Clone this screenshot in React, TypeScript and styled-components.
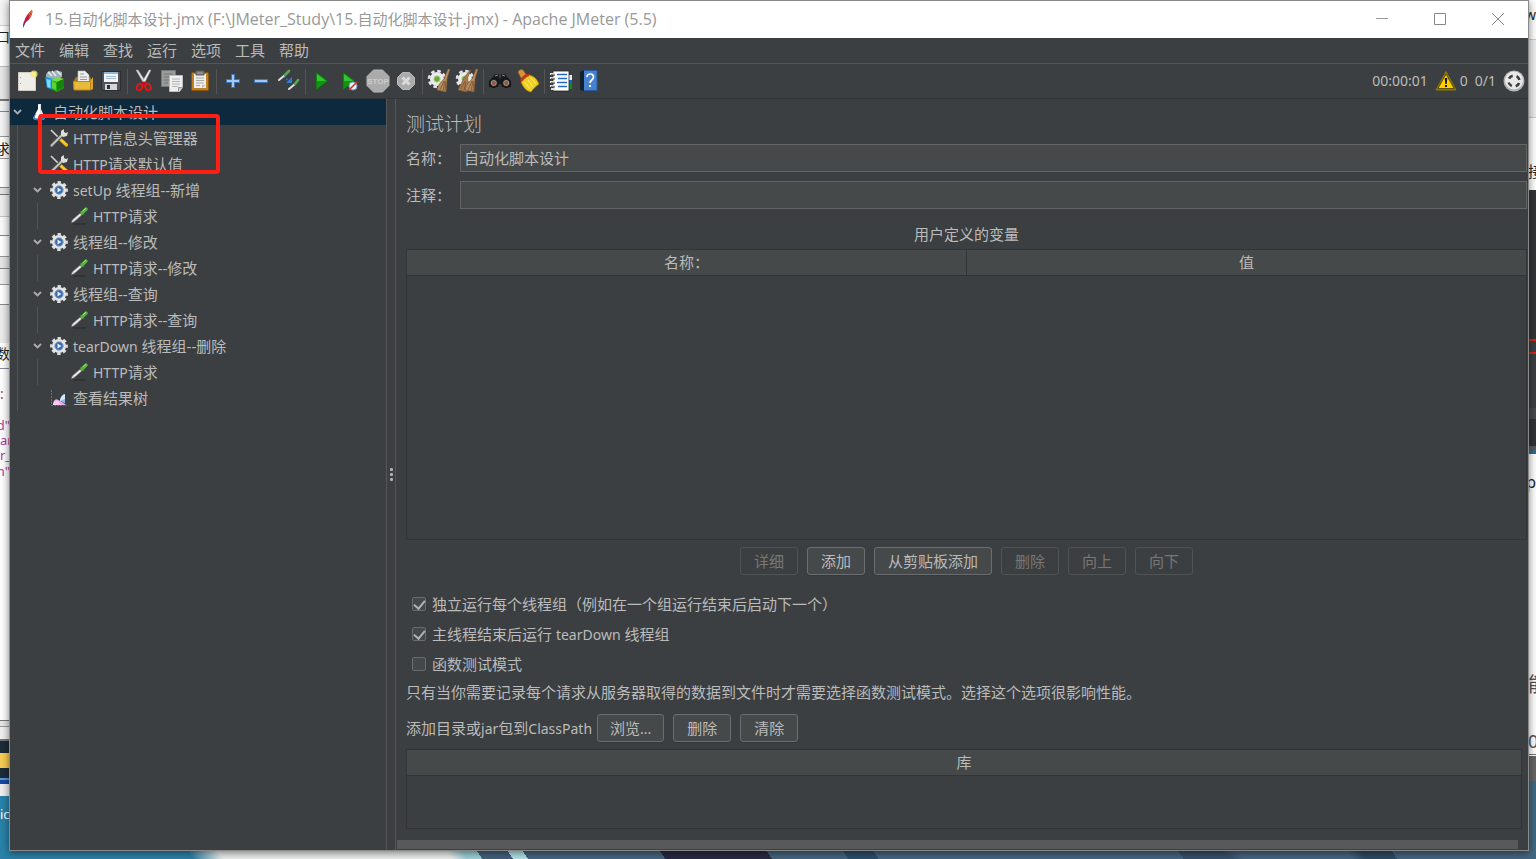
import React from "react";
import styled, { createGlobalStyle } from "styled-components";

const c = {
  bg: "#3c3f41",
  field: "#45494a",
  text: "#bbbbbb",
  line: "#555555",
  dark: "#323435",
  border: "#646464",
};

const GlobalStyle = createGlobalStyle`
  * { box-sizing: border-box; }
  body {
    margin: 0;
    font: 15px/20px "Noto Sans", "Noto Sans CJK SC", sans-serif;
    color: ${c.text};
  }
  button, input { font: inherit; color: inherit; }
  ul { list-style: none; margin: 0; padding: 0; }
  p { margin: 0; }
`;

/* ---------- desktop behind the window ---------- */

const Desktop = styled.div`
  display: grid;
  grid-template-columns: 10px minmax(0, 1fr) 8px;
  grid-template-rows: 1px minmax(0, 1fr) 9px;
  min-height: 100vh;
  background: #2a83aa;
`;

const Backdrop = styled.div`
  position: relative;
  overflow: hidden;
  grid-row: 1 / 4;
`;

const LeftBackdrop = styled(Backdrop)`
  grid-column: 1;
  background: linear-gradient(
    #f4f4f4 0 25px, #d0d0d0 25px 26px, #ffffff 26px 66px, #bbbbbb 66px 67px,
    #e6e6e6 67px 99px, #777777 99px 101px, #f2f2f2 101px 111px, #888888 111px 112px,
    #f4f4f4 112px 136px, #999999 136px 137px, #ffffff 137px 158px, #999999 158px 159px,
    #ffffff 159px 187px, #888888 187px 188px, #e4e4e4 188px 194px, #777777 194px 195px,
    #eeeeee 195px 216px, #c4c4c4 216px 217px, #fafafa 217px 235px, #888888 235px 236px,
    #ffffff 236px 256px, #999999 256px 257px, #e6e6e6 257px 268px, #888888 268px 269px,
    #eeeeee 269px 284px, #999999 284px 285px, #ffffff 285px 304px, #888888 304px 305px,
    #ececec 305px 343px, #ffffff 343px 368px, #8a8c99 368px 369px, #ffffff 369px 720px,
    #777777 720px 721px, #e6e6e6 721px 726px, #999999 726px 727px, #f0f0f0 727px 739px,
    #777777 739px 741px, #1d2c38 741px 753px, #f8cd54 753px 768px, #1d2c38 768px 778px,
    #5599cc 778px 780px, #164aa6 780px 784px, #eeeeee 784px 796px, #2a83aa 796px 100%
  );
`;

const RightBackdrop = styled(Backdrop)`
  grid-column: 3;
  background: linear-gradient(
    #ffffff 0 39px, #cccccc 39px 40px, #eeeeee 40px 117px, #cccccc 117px 118px,
    #ffffff 118px 190px, #333537 190px 339px, #dd2218 339px 341px, #3c3f41 341px 352px,
    #dd2218 352px 354px, #3c3f41 354px 408px, #45494a 408px 419px, #303335 419px 446px,
    #5a5a5a 446px 450px, #3a6883 450px 454px, #ffffff 454px 754px, #777777 754px 755px,
    #ffffff 755px 756px, #666666 756px 781px, #426982 781px 100%
  );
`;

const BottomBackdrop = styled.div`
  grid-column: 2;
  grid-row: 3;
  background: linear-gradient(
    56deg,
    #2c82a7 0 12%, #eef0ef 14% 29%, #9ed3da 30% 31%, #44617b 31% 33%,
    #b5e5e8 33% 34%, #48657f 34% 43%, #292942 43% 50%, #48657f 50% 55%,
    #2e4e69 55% 57%, #48657f 57% 77%, #38526b 77% 80%, #48657f 81% 88%,
    #2f4b63 89% 91%, #48657f 91% 100%
  );
`;

const Fragment = styled.span<{ $top: number; $color?: string; $size?: number; $right?: boolean }>`
  position: absolute;
  top: ${(p) => p.$top}px;
  ${(p) => (p.$right ? "right: 0;" : "left: 0;")}
  color: ${(p) => p.$color ?? "#222"};
  font-size: ${(p) => p.$size ?? 14}px;
  white-space: nowrap;
`;

/* ---------- application window ---------- */

const Window = styled.main`
  grid-column: 2;
  grid-row: 2;
  z-index: 1;
  display: flex;
  flex-direction: column;
  background: ${c.bg};
  box-shadow: 0 0 0 1px #8a8a8a, 0 2px 8px 1px rgba(0, 0, 0, 0.5);
`;

const TitleBar = styled.header`
  display: flex;
  align-items: center;
  height: 37px;
  padding: 0 1px 1px 9px;
  background: #ffffff;
  color: #999999;
  font-family: "Open Sans", "Noto Sans CJK SC", sans-serif;
`;

const Title = styled.h1`
  flex: 1;
  margin: 0 0 0 8px;
  font-size: 16px;
  font-weight: 400;
`;

const TitleHan = styled.span`
  font-size: 15px;
`;

const WindowButton = styled.button`
  display: grid;
  place-items: center;
  width: 58px;
  height: 36px;
  padding: 0;
  border: 0;
  background: none;
`;

const MenuBar = styled.nav`
  display: flex;
  align-items: center;
  gap: 14px;
  height: 26px;
  padding: 0 5px 2px;
  border-bottom: 1px solid ${c.line};
`;

const MenuItem = styled.button`
  padding: 0;
  border: 0;
  background: none;
`;

const ToolBar = styled.div`
  display: flex;
  align-items: center;
  height: 35px;
  padding: 0 3px;
  border-bottom: 1px solid ${c.dark};
`;

const ToolButton = styled.button`
  display: grid;
  place-items: center;
  width: 28px;
  height: 28px;
  padding: 0;
  border: 0;
  background: none;
`;

const ToolSeparator = styled.span`
  width: 1px;
  height: 25px;
  margin: 0 2px;
  background: ${c.line};
`;

const Status = styled.div`
  display: flex;
  align-items: center;
  margin-left: auto;
  font-size: 14px;
  gap: 7px;
`;

const Warnings = styled.span`
  display: flex;
  align-items: center;
  gap: 3px;
`;

const Body = styled.div`
  flex: 1;
  display: flex;
  min-height: 0;
`;

/* ---------- test plan tree ---------- */

const TreePanel = styled.aside`
  position: relative;
  flex: none;
  width: 377px;
  border-right: 1px solid ${c.line};
`;

const TreeRow = styled.li<{ $selected?: boolean }>`
  display: flex;
  align-items: center;
  height: 26px;
  white-space: pre;
  background: ${(p) => (p.$selected ? "#0d293e" : "transparent")};
`;

const Guide = styled.span`
  width: 13px;
  height: 26px;
  margin-left: 7px;
  border-left: 1px solid #505355;
`;

const Toggle = styled.span`
  display: grid;
  place-items: center;
  width: 15px;
`;

const TreeIcon = styled.span`
  display: grid;
  place-items: center;
  width: 28px;
`;

const Latin = styled.span`
  font-size: 14px;
`;

const RedFrame = styled.div`
  position: absolute;
  top: 15px;
  left: 28px;
  width: 182px;
  height: 60px;
  border: 4px solid #ff2015;
  border-radius: 4px;
`;

const Splitter = styled.div`
  display: flex;
  flex-direction: column;
  align-items: center;
  justify-content: center;
  gap: 2px;
  flex: none;
  width: 9px;
  border-right: 1px solid ${c.line};
`;

const Dot = styled.span`
  width: 3px;
  height: 3px;
  border-radius: 1px;
  background: #b0b0b0;
`;

/* ---------- editor ---------- */

const Editor = styled.section`
  flex: 1;
  min-width: 0;
  display: flex;
  flex-direction: column;
`;

const EditorContent = styled.div`
  flex: 1;
  display: flex;
  flex-direction: column;
  padding: 12px 1px 11px 10px;
`;

const Heading = styled.h2`
  margin: 0 0 7px;
  font-size: 19px;
  line-height: 26px;
  font-weight: 300;
`;

const Field = styled.div`
  display: flex;
  align-items: center;
  margin-bottom: 9px;
`;

const FieldLabel = styled.label`
  flex: none;
  width: 54px;
`;

const TextInput = styled.input`
  flex: 1;
  min-width: 0;
  height: 28px;
  padding: 0 3px 2px;
  border: 1px solid ${c.border};
  background: ${c.field};
  outline: 0;
`;

const TableFrame = styled.div<{ $grow?: boolean }>`
  border: 1px solid ${c.dark};
  ${(p) => (p.$grow ? "flex: 1; min-height: 200px;" : "height: 80px; margin-right: 5px;")}
`;

const DataTable = styled.table`
  width: 100%;
  border-collapse: collapse;
  table-layout: fixed;
`;

const HeaderCell = styled.th`
  height: 25px;
  padding: 0;
  font-weight: 400;
  background: ${c.field};
  border-bottom: 1px solid ${c.dark};
  & + & {
    border-left: 1px solid ${c.dark};
  }
`;

const TableTitle = styled.div`
  margin: 6px 0 5px;
  text-align: center;
`;

const ButtonRow = styled.div`
  display: flex;
  justify-content: center;
  gap: 9px;
  margin: 7px 0 14px;
`;

const PushButton = styled.button<{ $tight?: boolean }>`
  height: 28px;
  padding: 0 ${(p) => (p.$tight ? 12 : 13)}px;
  border: 1px solid #6b6e70;
  border-radius: 3px;
  background: ${c.field};
  box-shadow: 0 1px 0 #36393a;
  &:disabled {
    color: #777777;
    border-color: #505354;
    background: none;
    box-shadow: none;
  }
`;

const CheckRow = styled.label`
  display: flex;
  align-items: center;
  gap: 6px;
  height: 30px;
  padding-left: 6px;
`;

const CheckBox = styled.input`
  appearance: none;
  display: grid;
  place-items: center;
  width: 14px;
  height: 14px;
  margin: 0;
  border: 1px solid #6b6b6b;
  border-radius: 2px;
  background: #43494a;
  &:checked::after {
    content: "";
    width: 5px;
    height: 9px;
    margin-bottom: 2px;
    border: solid #b4b4b4;
    border-width: 0 2px 2px 0;
    transform: rotate(40deg);
  }
`;

const Note = styled.p`
  margin-top: 3px;
`;

const ClassPathRow = styled.div`
  display: flex;
  align-items: center;
  gap: 5px;
  margin: 12px 0 7px;
`;

const ButtonGroup = styled.div`
  display: flex;
  gap: 9px;
`;

const ScrollTrack = styled.div`
  height: 10px;
  padding: 0 10px 1px 1px;
`;

const ScrollThumb = styled.div`
  height: 9px;
  background: #58595b;
`;

/* ---------- icons ---------- */

const Svg = ({ size = 24, children }: { size?: number; children: React.ReactNode }) => (
  <svg width={size} height={size} viewBox={`0 0 ${size} ${size}`} fill="none" aria-hidden="true">
    {children}
  </svg>
);

const Feather = () => (
  <Svg size={18}>
    <path d="M5 12C6 7 9 3 13 0c1 3-1 9-6 12z" fill="#c9223f" />
    <path d="M9.500 4c1-2 2-3 3.500-4 1 2 0 4-1 6l-2 2z" fill="#ee6b2c" />
    <path d="M5 11l2 1-1 2-2 4 0-3z" fill="#7a2a78" />
    <path d="M6 12L12 3" stroke="#8b204d" strokeWidth=".7" />
  </Svg>
);

const NewIcon = () => (
  <Svg>
    <path d="M3.500 3.500h17v18h-17z" fill="#efede8" stroke="#d0ccc2" />
    <path d="M5.500 8v1m0 5v1" stroke="#999" />
    <circle cx="19" cy="5" r="3.600" fill="#f6e58d" opacity=".8" />
    <circle cx="19" cy="5" r="2" fill="#fff27a" />
  </Svg>
);

const TemplatesIcon = () => (
  <Svg>
    <path d="M3 5l3-3 4 1 3-2 6 2v5L12 12 3 8z" fill="#9eb1b8" />
    <path d="M5 3l4 4m0-5l4 5m1-5l4 4" stroke="#e8eef0" strokeWidth="1.500" />
    <path d="M2 8l10 2v11l-8-2z" fill="#1d9be0" />
    <path d="M3.500 10l4 1v8l-3-1z" fill="#7cdcfb" />
    <path d="M8 11l6 2 7-3v9l-7 4-6-3z" fill="#25a613" />
    <path d="M8 11l6-3 7 2-7 3z" fill="#75dd42" />
    <path d="M14 13v9l7-4v-8z" fill="#14850b" />
    <path d="M9 12l4 2v7l-4-2z" fill="#5bd338" />
  </Svg>
);

const OpenIcon = () => (
  <Svg>
    <path d="M3 11l2-3h14l2 3v8H3z" fill="#a97912" />
    <path d="M7 2h7l4 4v8H7z" fill="#eeeeee" stroke="#bbb" strokeWidth=".6" />
    <path d="M9 5h4M9 8h7M9 10.500h7" stroke="#999" />
    <path d="M2 12h17l3-4v12l-2 1H3z" fill="#dba626" />
    <path d="M2.500 12.500h17V21H3z" fill="#e9b93c" stroke="#bd8616" />
  </Svg>
);

const SaveIcon = () => (
  <Svg>
    <path d="M2.500 2.500h19v19h-17l-2-2z" fill="#50545d" stroke="#2b2d30" />
    <path d="M5 3h14v10H5z" fill="#f2f5f7" />
    <path d="M5 3h14v2H5z" fill="#8db9dc" />
    <path d="M7 7.500h10M7 9.500h10" stroke="#a8bdcc" />
    <path d="M6 15h12v6H6z" fill="#d4d6d8" />
    <path d="M8 16h3v4H8z" fill="#303338" />
  </Svg>
);

const CutIcon = () => (
  <Svg>
    <path d="M4 1h2l8 12-2 2z" fill="#dedfe0" stroke="#9b9b9b" strokeWidth=".5" />
    <path d="M19 1h-2l-7 12 2 2z" fill="#f0f0f0" stroke="#9b9b9b" strokeWidth=".5" />
    <path d="M12 13l-2 2M12 13l2 2" stroke="#c51111" strokeWidth="3" />
    <ellipse cx="7.500" cy="18" rx="2.600" ry="3.200" transform="rotate(25 7.500 18)" stroke="#e01818" strokeWidth="2" />
    <ellipse cx="16" cy="18" rx="2.600" ry="3.200" transform="rotate(-25 16 18)" stroke="#e01818" strokeWidth="2" />
  </Svg>
);

const CopyIcon = () => (
  <Svg>
    <path d="M1.500 1.500h14v16h-14z" fill="#9a9c9b" stroke="#777" />
    <path d="M4 5h9M4 8h9M4 11h5M4 14h4" stroke="#747675" />
    <path d="M9.500 6.500h13v12l-3 4h-10z" fill="#efefef" stroke="#bdbdbd" />
    <path d="M12 10h8M12 12.500h8M12 15h8M12 17.500h6" stroke="#b4b4b4" />
    <path d="M18.500 22v-3.500h4" fill="#ccc" stroke="#999" />
  </Svg>
);

const PasteIcon = () => (
  <Svg>
    <rect x="3.500" y="3.500" width="17" height="18" rx="1" fill="#c18123" stroke="#875411" />
    <path d="M6 5h12v14H6z" fill="#eeeeec" />
    <path d="M8 2h8v4H8z" fill="#8c8f8a" stroke="#52544f" />
    <path d="M8 9h8M8 11.500h8M8 14h8M8 16.500h4" stroke="#a9a9a9" />
    <path d="M14 19v-3h4z" fill="#bbb" />
  </Svg>
);

const PlusIcon = () => (
  <Svg>
    <path d="M12 5v14M5 12h14" stroke="#3f73b8" strokeWidth="4" />
    <path d="M12 6v12M6 12h12" stroke="#a4c8ee" strokeWidth="2" />
  </Svg>
);

const MinusIcon = () => (
  <Svg>
    <path d="M5 12h14" stroke="#3f73b8" strokeWidth="4" />
    <path d="M6 12h12" stroke="#a4c8ee" strokeWidth="2" />
  </Svg>
);

const ToggleIcon = () => (
  <Svg>
    <path d="M2 11L8 6" stroke="#e1e1df" strokeWidth="2" strokeLinecap="round" />
    <path d="M8 6l4-4" stroke="#5da553" strokeWidth="2.600" strokeLinecap="round" />
    <path d="M12 20l6-5" stroke="#e1e1df" strokeWidth="2" strokeLinecap="round" />
    <path d="M18 15l3-4" stroke="#5da553" strokeWidth="2.600" strokeLinecap="round" />
    <path d="M7 8l6 5" stroke="#3c75c8" strokeWidth="1.400" strokeDasharray="1.500 1.500" />
    <path d="M15 8v6H9z" fill="#2b7fe0" />
  </Svg>
);

const PlayShape = ({ x = 0 }: { x?: number }) => (
  <>
    <path d={`M${5 + x} 3l12 9-12 9z`} fill="#129312" stroke="#0b640b" strokeWidth=".7" />
    <path d={`M${6 + x} 5l9 7-9 0z`} fill="#35c335" />
  </>
);

const StartIcon = () => (
  <Svg>
    <PlayShape x={1} />
  </Svg>
);

const StartNoPauseIcon = () => (
  <Svg>
    <PlayShape />
    <circle cx="15" cy="17" r="4" fill="#e8f0fa" stroke="#7f9dc0" />
    <path d="M11 21l8-8" stroke="#dd2d24" strokeWidth="1.600" />
  </Svg>
);

const StopIcon = () => (
  <Svg>
    <path d="M7.500 1h9L23 7.500v9L16.500 23h-9L1 16.500v-9z" fill="#ababab" stroke="#b9b9b9" />
    <text x="12" y="15" textAnchor="middle" fontSize="8" fontWeight="700" fontFamily="Liberation Sans" fill="#cccccc">
      STOP
    </text>
  </Svg>
);

const ShutdownIcon = () => (
  <Svg>
    <path d="M8.500 3.500h7l5 5v7l-5 5h-7l-5-5v-7z" fill="#ababab" stroke="#b9b9b9" />
    <path d="M8.500 8.500l7 7m0-7l-7 7" stroke="#dadada" strokeWidth="3" />
  </Svg>
);

const ClearIcon = ({ double }: { double?: boolean }) => (
  <Svg>
    <circle cx="10" cy="10" r="8" stroke="#e6e6e6" strokeWidth="2.600" strokeDasharray="3.600 2.683" />
    <circle cx="10" cy="10" r="7" fill="#ebebeb" />
    <circle cx="10" cy="10" r="3.200" fill="#67aa2d" stroke="#b9cfa4" />
    {double && <path d="M15 1h1l-4 9 2 4-2 9-9-2 6-12z" fill="#a97d50" stroke="#775331" strokeWidth=".6" />}
    <path d="M21 0h2l-3 10v3l-1 10-9-2c1-4 3-8 7-11z" fill="#b98e60" stroke="#775331" strokeWidth=".6" />
    <path d="M17 12l-4 9m5-9l-2 10m3-10l-1 10" stroke="#755231" strokeWidth=".8" />
    {double && <path d="M10 12l-4 8m5-7l-2 8" stroke="#755231" strokeWidth=".8" />}
  </Svg>
);

const SearchIcon = () => (
  <Svg>
    <path d="M4 9l3-4h4v4h2V5h4l3 4 3 6v3h-9l-1-3h-2l-1 3H1v-3z" fill="#191b1c" />
    <path d="M7 7l3-1m4 0l3 1" stroke="#8b8d8e" />
    <circle cx="5.800" cy="14" r="4.500" fill="#252627" stroke="#0e0f10" />
    <circle cx="18.200" cy="14" r="4.500" fill="#252627" stroke="#0e0f10" />
    <circle cx="5.800" cy="14" r="2.500" fill="#9c5334" stroke="#9a9a9a" />
    <circle cx="18.200" cy="14" r="2.500" fill="#9c5334" stroke="#9a9a9a" />
  </Svg>
);

const BroomIcon = () => (
  <Svg>
    <path d="M2 3c1-2 3-3 5-2l4 6-5 4z" fill="#d6943a" stroke="#96601c" strokeWidth=".7" />
    <path d="M5 13l8-7c5 1 8 4 10 9-3 2-6 5-8 8-5-1-8-5-10-10z" fill="#f0cf1e" stroke="#aa870b" strokeWidth=".7" />
    <path d="M5 12c1-3 4-6 8-6" stroke="#d12b1a" strokeWidth="2.500" />
    <path d="M9 13l5 7m-2-9l5 7m-2-9l5 6" stroke="#fff08a" />
  </Svg>
);

const FunctionIcon = () => (
  <Svg>
    <path d="M19 6h4v5h-4z" fill="#e9e9e9" />
    <path d="M19 11h4v4h-4z" fill="#1a62d0" />
    <path d="M19 15h4v5h-4z" fill="#109010" />
    <path d="M4 2h16v20H4z" fill="#ffffff" stroke="#222" strokeWidth=".8" />
    <path d="M1 5h5M1 9h5M1 13h5M1 17h5M2 20h4" stroke="#e0e0e0" strokeWidth="2" />
    <path d="M2 6h4M2 10h4M2 14h4M2 18h4" stroke="#333" />
    <path d="M8 5.500h10M9 9.500h9M8 13.500h10M9 17.500h9" stroke="#2168cf" strokeWidth="1.500" />
  </Svg>
);

const HelpIcon = () => (
  <Svg>
    <path d="M6 1.500h14v20H6z" fill="#4582cf" stroke="#2a5aa0" />
    <path d="M3 3l4-2v21l-4-1z" fill="#15202b" />
    <path d="M10 8c0-4 6.500-4 6.500 0 0 3-3.500 3-3.500 6" stroke="#fff" strokeWidth="1.700" />
    <path d="M12 16h2v2h-2z" fill="#fff" />
  </Svg>
);

const WarningIcon = () => (
  <Svg size={22}>
    <path d="M11 1.500L21 20H1z" fill="#8b7606" stroke="#8b7606" strokeLinejoin="round" />
    <path d="M11 4l8 14.500H3z" fill="#ffcf00" stroke="#4a3f00" strokeWidth=".8" />
    <path d="M9.800 8h2.400l-.5 6h-1.400zM10 15h2v2h-2z" fill="#111" />
  </Svg>
);

const RunIcon = () => (
  <Svg size={22}>
    <circle cx="11" cy="11" r="10.500" fill="#b4b4b4" />
    <circle cx="11" cy="10.500" r="9" fill="#e9e9e9" />
    <circle cx="11" cy="11" r="5.500" stroke="#3e3e3e" strokeWidth="2.600" strokeDasharray="4.600 4.040" strokeDashoffset="-2.020" />
  </Svg>
);

const ChevronIcon = () => (
  <svg width="9" height="6" viewBox="0 0 9 6" fill="none" aria-hidden="true">
    <path d="M1 1l3.500 3.500L8 1" stroke="#adadad" strokeWidth="1.800" />
  </svg>
);

const FlaskIcon = () => (
  <Svg size={18}>
    <path d="M8 1h3v5l4 9c0 3-12 3-12 0l5-9z" fill="#dfe5ea" />
    <path d="M5 11h9l1 4c0 3-12 3-12 0z" fill="#3670bd" />
    <path d="M8 2h2v7l-1 6c-4 1-5 0-4-2l3-6z" fill="#ffffff" />
  </Svg>
);

const ToolsIcon = () => (
  <Svg size={20}>
    <path d="M2 2l9 9" stroke="#d6d6d6" strokeWidth="1.600" />
    <path d="M11 11l6.500 6" stroke="#efb913" strokeWidth="3.200" strokeLinecap="round" />
    <path d="M2.500 17.500L14 6" stroke="#4f504e" strokeWidth="4" strokeLinecap="round" />
    <path d="M2.500 17.500L14 6" stroke="#c4c5c1" strokeWidth="2" strokeLinecap="round" />
    <path d="M12 7V3l3-2v3l2 1 2-1-1 4-4 1z" fill="#dddeda" />
    <path d="M12 12l5 4.500" stroke="#ffdc52" />
  </Svg>
);

const GearIcon = () => (
  <Svg size={18}>
    <circle cx="9" cy="9" r="7.700" stroke="#e0e0e0" strokeWidth="2.400" strokeDasharray="3.400 2.648" strokeDashoffset="1.700" />
    <circle cx="9" cy="9" r="7" fill="#e6e6e6" />
    <circle cx="9" cy="9" r="4.200" fill="#3568ad" stroke="#87a1c5" />
    <path d="M7.500 6.500l4 2.500-4 2.500z" fill="#e8f0fb" />
  </Svg>
);

const PipetteIcon = () => (
  <Svg size={20}>
    <path d="M4 18h13" stroke="#2f3132" strokeWidth="1.500" />
    <path d="M2 17l1-3 8-7 2 2-8 7z" fill="#d5d6d3" stroke="#565856" strokeWidth=".7" />
    <path d="M5 14l6-5" stroke="#ffffff" />
    <path d="M11 5l4 4" stroke="#356f29" strokeWidth="1.600" />
    <path d="M13 7l4-4" stroke="#5fae4a" strokeWidth="3.400" strokeLinecap="round" />
    <path d="M14 5l3-3" stroke="#a6dc8e" />
  </Svg>
);

const ResultsIcon = () => (
  <Svg size={18}>
    <path d="M1.500 1v15.500H17" stroke="#6a6c6d" strokeDasharray="2 1" />
    <path d="M3 16c0-5 3-7 5-5l3 1 5 4z" fill="#f3a6e4" />
    <path d="M3 15l3-4 3 2 2 3H3z" fill="#f8cdf0" />
    <path d="M10 12c0-4 3-7 5-7v9c-2 0-2-2-5-2z" fill="#cfe8fa" />
    <path d="M10 12l5 3v-5z" fill="#4a8fd2" opacity=".5" />
  </Svg>
);

/* ---------- data ---------- */

const menus = ["文件", "编辑", "查找", "运行", "选项", "工具", "帮助"];

const toolGroups: { name: string; icon: React.ReactNode }[][] = [
  [
    { name: "新建", icon: <NewIcon /> },
    { name: "模板", icon: <TemplatesIcon /> },
    { name: "打开", icon: <OpenIcon /> },
    { name: "保存", icon: <SaveIcon /> },
  ],
  [
    { name: "剪切", icon: <CutIcon /> },
    { name: "复制", icon: <CopyIcon /> },
    { name: "粘贴", icon: <PasteIcon /> },
  ],
  [
    { name: "展开", icon: <PlusIcon /> },
    { name: "折叠", icon: <MinusIcon /> },
    { name: "切换", icon: <ToggleIcon /> },
  ],
  [
    { name: "启动", icon: <StartIcon /> },
    { name: "不停顿启动", icon: <StartNoPauseIcon /> },
    { name: "停止", icon: <StopIcon /> },
    { name: "关闭", icon: <ShutdownIcon /> },
  ],
  [
    { name: "清除", icon: <ClearIcon /> },
    { name: "清除全部", icon: <ClearIcon double /> },
  ],
  [
    { name: "查找", icon: <SearchIcon /> },
    { name: "重置查找", icon: <BroomIcon /> },
  ],
  [
    { name: "函数助手", icon: <FunctionIcon /> },
    { name: "帮助", icon: <HelpIcon /> },
  ],
];

const treeIcons = {
  plan: <FlaskIcon />,
  config: <ToolsIcon />,
  group: <GearIcon />,
  sampler: <PipetteIcon />,
  results: <ResultsIcon />,
};

const tree: { level: number; icon: keyof typeof treeIcons; label: string; open?: boolean }[] = [
  { level: 0, icon: "plan", label: "自动化脚本设计", open: true },
  { level: 1, icon: "config", label: "HTTP信息头管理器" },
  { level: 1, icon: "config", label: "HTTP请求默认值" },
  { level: 1, icon: "group", label: "setUp 线程组--新增", open: true },
  { level: 2, icon: "sampler", label: "HTTP请求" },
  { level: 1, icon: "group", label: "线程组--修改", open: true },
  { level: 2, icon: "sampler", label: "HTTP请求--修改" },
  { level: 1, icon: "group", label: "线程组--查询", open: true },
  { level: 2, icon: "sampler", label: "HTTP请求--查询" },
  { level: 1, icon: "group", label: "tearDown 线程组--删除", open: true },
  { level: 2, icon: "sampler", label: "HTTP请求" },
  { level: 1, icon: "results", label: "查看结果树" },
];

const rowButtons = [
  { label: "详细", disabled: true },
  { label: "添加" },
  { label: "从剪贴板添加" },
  { label: "删除", disabled: true },
  { label: "向上", disabled: true },
  { label: "向下", disabled: true },
];

const options = [
  { label: "独立运行每个线程组（例如在一个组运行结束后启动下一个）", on: true },
  { label: "主线程结束后运行 tearDown 线程组", on: true },
  { label: "函数测试模式", on: false },
];

/* Latin runs are set one size below the Chinese text around them. */
const Mixed = ({ text }: { text: string }) => (
  <span>
    {text.split(/([A-Za-z.]+)/).map((part, i) => (i % 2 ? <Latin key={i}>{part}</Latin> : part))}
  </span>
);

export default function App() {
  return (
    <>
      <GlobalStyle />
      <Desktop>
        <LeftBackdrop aria-hidden="true">
          <Fragment $top={27} $right>口</Fragment>
          <Fragment $top={139} $right>求</Fragment>
          <Fragment $top={344} $right>数</Fragment>
          <Fragment $top={384} $color="#a0522d">:</Fragment>
          <Fragment $top={415} $color="#b8369f" $size={13} $right>d"</Fragment>
          <Fragment $top={430} $color="#b8369f" $size={13}>am</Fragment>
          <Fragment $top={445} $color="#b8369f" $size={13}>r_</Fragment>
          <Fragment $top={461} $color="#b8369f" $size={13} $right>n"</Fragment>
          <Fragment $top={804} $color="#ffffff" $size={13}>ic</Fragment>
        </LeftBackdrop>
        <Window>
          <TitleBar>
            <Feather />
            <Title>
              15.<TitleHan>自动化脚本设计</TitleHan>.jmx (F:\JMeter_Study\15.
              <TitleHan>自动化脚本设计</TitleHan>.jmx) - Apache JMeter (5.5)
            </Title>
            <WindowButton aria-label="最小化">
              <Svg size={14}><path d="M1 6.500h12" stroke="#999" /></Svg>
            </WindowButton>
            <WindowButton aria-label="最大化">
              <Svg size={14}><path d="M1.500 1.500h11v11h-11z" stroke="#888" /></Svg>
            </WindowButton>
            <WindowButton aria-label="关闭窗口">
              <Svg size={14}><path d="M1 1l12 12M13 1L1 13" stroke="#888" /></Svg>
            </WindowButton>
          </TitleBar>
          <MenuBar>
            {menus.map((m) => (
              <MenuItem key={m}>{m}</MenuItem>
            ))}
          </MenuBar>
          <ToolBar>
            {toolGroups.map((group, i) => (
              <React.Fragment key={i}>
                {i > 0 && <ToolSeparator />}
                {group.map((t) => (
                  <ToolButton key={t.name} aria-label={t.name}>
                    {t.icon}
                  </ToolButton>
                ))}
              </React.Fragment>
            ))}
            <Status>
              <span>00:00:01</span>
              <Warnings>
                <WarningIcon />
                <span>0</span>
              </Warnings>
              <span>0/1</span>
              <RunIcon />
            </Status>
          </ToolBar>
          <Body>
            <TreePanel>
              <ul>
                {tree.map((n, i) => (
                  <TreeRow key={i} $selected={i === 0}>
                    {Array.from({ length: n.level }, (_, g) => (
                      <Guide key={g} />
                    ))}
                    <Toggle>{n.open && <ChevronIcon />}</Toggle>
                    <TreeIcon>{treeIcons[n.icon]}</TreeIcon>
                    <Mixed text={n.label} />
                  </TreeRow>
                ))}
              </ul>
              <RedFrame />
            </TreePanel>
            <Splitter>
              <Dot />
              <Dot />
              <Dot />
            </Splitter>
            <Editor>
              <EditorContent>
                <Heading>测试计划</Heading>
                <Field>
                  <FieldLabel htmlFor="plan-name">名称：</FieldLabel>
                  <TextInput id="plan-name" defaultValue="自动化脚本设计" />
                </Field>
                <Field>
                  <FieldLabel htmlFor="plan-comment">注释：</FieldLabel>
                  <TextInput id="plan-comment" />
                </Field>
                <TableTitle>用户定义的变量</TableTitle>
                <TableFrame $grow>
                  <DataTable>
                    <thead>
                      <tr>
                        <HeaderCell>名称：</HeaderCell>
                        <HeaderCell>值</HeaderCell>
                      </tr>
                    </thead>
                  </DataTable>
                </TableFrame>
                <ButtonRow>
                  {rowButtons.map((b) => (
                    <PushButton key={b.label} disabled={b.disabled}>
                      {b.label}
                    </PushButton>
                  ))}
                </ButtonRow>
                {options.map((o) => (
                  <CheckRow key={o.label}>
                    <CheckBox type="checkbox" defaultChecked={o.on} />
                    <Mixed text={o.label} />
                  </CheckRow>
                ))}
                <Note>只有当你需要记录每个请求从服务器取得的数据到文件时才需要选择函数测试模式。选择这个选项很影响性能。</Note>
                <ClassPathRow>
                  <Mixed text="添加目录或jar包到ClassPath" />
                  <ButtonGroup>
                    <PushButton $tight>
                      <Mixed text="浏览..." />
                    </PushButton>
                    <PushButton>删除</PushButton>
                    <PushButton>清除</PushButton>
                  </ButtonGroup>
                </ClassPathRow>
                <TableFrame>
                  <DataTable>
                    <thead>
                      <tr>
                        <HeaderCell>库</HeaderCell>
                      </tr>
                    </thead>
                  </DataTable>
                </TableFrame>
              </EditorContent>
              <ScrollTrack>
                <ScrollThumb />
              </ScrollTrack>
            </Editor>
          </Body>
        </Window>
        <BottomBackdrop />
        <RightBackdrop aria-hidden="true">
          <Fragment $top={5} $right>w</Fragment>
          <Fragment $top={161} $size={15}>接</Fragment>
          <Fragment $top={472} $size={16} $right>p</Fragment>
          <Fragment $top={675} $size={20} $color="#555">能</Fragment>
          <Fragment $top={731} $size={18} $color="#555">00</Fragment>
        </RightBackdrop>
      </Desktop>
    </>
  );
}
